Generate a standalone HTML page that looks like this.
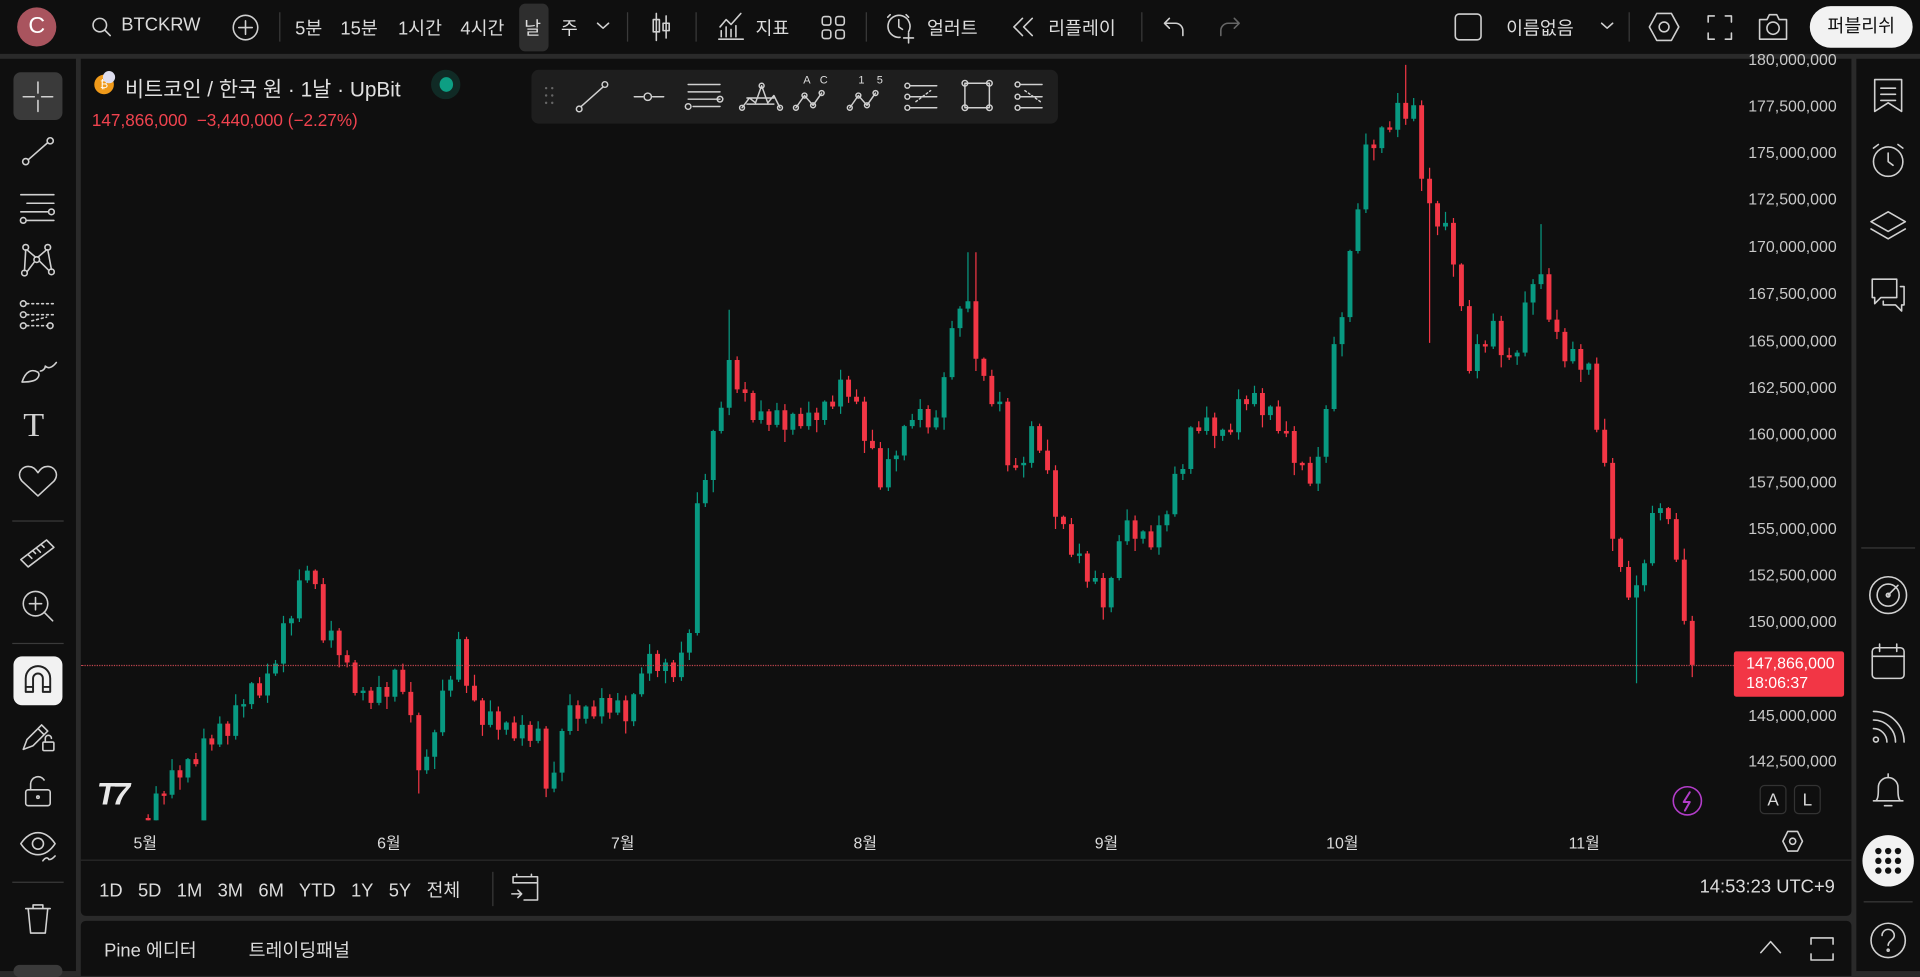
<!DOCTYPE html>
<html><head><meta charset="utf-8">
<style>
*{margin:0;padding:0;box-sizing:border-box}
html,body{width:1920px;height:971px;overflow:hidden;background:#2a2a2a}
#w{position:absolute;left:0;top:0;width:1568px;height:793px;transform:scale(1.22449);transform-origin:0 0;font-family:"Liberation Sans","Noto Sans CJK KR",sans-serif;color:#d8d8d8;background:#2a2a2a}
.p{position:absolute;background:#0f0f0f}
.t{position:absolute;white-space:nowrap;font-size:15px;color:#dcdcdc}
.sep{position:absolute;width:1px;background:#3a3a3a}
svg.i{position:absolute;fill:none;stroke:#d0d0d0;stroke-width:1.3;stroke-linecap:round;stroke-linejoin:round}
.ax{position:absolute;right:68px;font-size:13px;color:#c8c8c8;text-align:right}
</style></head><body><div id="w">
<!-- top bar -->
<div class="p" style="left:0;top:0;width:1568px;height:44px"></div>
<div style="position:absolute;left:14px;top:6px;width:32px;height:32px;border-radius:50%;background:#a9545e;color:#fff;font-size:19px;text-align:center;line-height:32px">C</div>
<svg class="i" style="left:74px;top:13px" width="18" height="18"><circle cx="7.5" cy="7.5" r="5.5"/><path d="M11.5 11.5l4.5 4.5"/></svg>
<div class="t" style="left:99px;top:12px">BTCKRW</div>
<svg class="i" style="left:189px;top:11px" width="23" height="23"><circle cx="11.5" cy="11.5" r="10"/><path d="M11.5 6v11M6 11.5h11"/></svg>
<div class="sep" style="left:228px;top:10px;height:24px"></div>
<div class="t" style="left:241px;top:12px">5분</div>
<div class="t" style="left:278px;top:12px">15분</div>
<div class="t" style="left:325px;top:12px">1시간</div>
<div class="t" style="left:376px;top:12px">4시간</div>
<div style="position:absolute;left:424px;top:3px;width:24px;height:39px;background:#2e2e2e;border-radius:5px"></div>
<div class="t" style="left:428px;top:12px">날</div>
<div class="t" style="left:458px;top:12px">주</div>
<svg class="i" style="left:487px;top:17px" width="11" height="8"><path d="M1 2l4.5 4 4.5-4"/></svg>
<div class="sep" style="left:512px;top:10px;height:24px"></div>
<svg class="i" style="left:530px;top:10px" width="20" height="24"><path d="M6 1v22M14 3v18"/><rect x="3.5" y="6" width="5" height="10"/><rect x="11.5" y="9" width="5" height="6"/></svg>
<div class="sep" style="left:568px;top:10px;height:24px"></div>
<svg class="i" style="left:585px;top:10px" width="24" height="24"><path d="M2 22h20M4 20v-5M8 20v-8M12 20v-6M16 20v-9M3 12l5-6 4 4 8-9"/></svg>
<div class="t" style="left:617px;top:12px">지표</div>
<svg class="i" style="left:670px;top:12px" width="21" height="21"><rect x="1.5" y="1.5" width="7" height="7" rx="2"/><rect x="12.5" y="1.5" width="7" height="7" rx="2"/><rect x="1.5" y="12.5" width="7" height="7" rx="2"/><rect x="12.5" y="12.5" width="7" height="7" rx="2"/></svg>
<div class="sep" style="left:707px;top:10px;height:24px"></div>
<svg class="i" style="left:723px;top:9px" width="26" height="27"><path d="M19 17a9 9 0 1 0-7 4.5"/><path d="M11 7v6l3 2M19 18v8M15 22h8M4 3l-2 2M17 3l2 2"/></svg>
<div class="t" style="left:757px;top:12px">얼러트</div>
<svg class="i" style="left:826px;top:14px" width="20" height="16"><path d="M9 1L2 8l7 7M17 1l-7 7 7 7"/></svg>
<div class="t" style="left:856px;top:12px">리플레이</div>
<div class="sep" style="left:932px;top:10px;height:24px"></div>
<svg class="i" style="left:949px;top:13px" width="20" height="18"><path d="M6 2L2 6l4 4M2 6h9a6 6 0 0 1 6 6v4"/></svg>
<svg class="i" style="left:994px;top:13px;stroke:#666" width="20" height="18"><path d="M14 2l4 4-4 4M18 6H9a6 6 0 0 0-6 6v4"/></svg>
<svg class="i" style="left:1187px;top:10px" width="24" height="24"><rect x="1.5" y="1.5" width="21" height="21" rx="3"/></svg>
<div class="t" style="left:1230px;top:12px">이름없음</div>
<svg class="i" style="left:1307px;top:17px" width="11" height="8"><path d="M1 2l4.5 4 4.5-4"/></svg>
<div class="sep" style="left:1330px;top:10px;height:24px"></div>
<svg class="i" style="left:1346px;top:9px" width="26" height="26"><path d="M7 2h12l6 11-6 11H7L1 13z"/><circle cx="13" cy="13" r="4"/></svg>
<svg class="i" style="left:1394px;top:12px" width="21" height="21"><path d="M1 6V1h5M15 1h5v5M20 15v5h-5M6 20H1v-5"/></svg>
<svg class="i" style="left:1435px;top:10px" width="26" height="24"><path d="M2 6h6l2-4h6l2 4h6v16H2z"/><circle cx="13" cy="13" r="5"/></svg>
<div style="position:absolute;left:1478px;top:5px;width:84px;height:34px;border-radius:17px;background:#f2f2f2;color:#111;font-size:15px;text-align:center;line-height:34px">퍼블리쉬</div>

<!-- left toolbar -->
<div class="p" style="left:0;top:48px;width:62px;height:745px"></div>
<div style="position:absolute;left:11px;top:59px;width:40px;height:39px;background:#3a3a3a;border-radius:6px"></div>
<svg class="i" style="left:16px;top:64px" width="30" height="30"><path d="M15 3v9M15 18v9M3 15h9M18 15h9"/></svg>
<svg class="i" style="left:16px;top:110px" width="30" height="28"><circle cx="5" cy="22" r="2.5"/><circle cx="25" cy="5" r="2.5"/><path d="M7 20.5l16-14"/></svg>
<svg class="i" style="left:14px;top:155px" width="32" height="28"><path d="M3 4h27M8 11h22M3 18h22M8 25h22"/><circle cx="28" cy="18" r="2.3"/><circle cx="5" cy="25" r="2.3"/></svg>
<svg class="i" style="left:16px;top:198px" width="30" height="30"><circle cx="5" cy="4" r="2.3"/><circle cx="23" cy="4" r="2.3"/><circle cx="4" cy="25" r="2.3"/><circle cx="26" cy="24" r="2.3"/><circle cx="14" cy="14" r="2.3"/><path d="M5 6l-1 17M6 6l7 6M22 6l-7 6M23 6l3 16M6 24l6-8M24 23l-8-8"/></svg>
<svg class="i" style="left:14px;top:244px" width="32" height="28"><circle cx="5" cy="4" r="2.3"/><circle cx="5" cy="13" r="2.3"/><circle cx="5" cy="22" r="2.3"/><circle cx="27" cy="22" r="2.3"/><path d="M8 4h22M8 13h22M8 22h17M12 18l12-3" stroke-dasharray="1.5 2.5"/></svg>
<svg class="i" style="left:16px;top:288px" width="32" height="28"><path d="M2 24c3-9 8-11 13-8 2 2 0 6-4 7-3 1-6 1-9 1zM17 15c2 0 4-2 4-4M21 11c2 2 5 2 9-3"/></svg>
<div style="position:absolute;left:19px;top:332px;font-family:'Liberation Serif',serif;font-size:28px;color:#d0d0d0">T</div>
<svg class="i" style="left:14px;top:378px" width="34" height="30"><path d="M17 27L4 15C-1 9 4 2 10 3c3 0 5 2 7 5 2-3 4-5 7-5 6-1 11 6 6 12z"/></svg>
<div style="position:absolute;left:10px;top:425px;width:42px;height:1px;background:#3a3a3a"></div>
<svg class="i" style="left:15px;top:436px" width="32" height="30"><path d="M2 21L23 5l6 6L8 27z M8 17l3 3M12 14l2 2M15 12l3 3M19 9l2 2"/></svg>
<svg class="i" style="left:16px;top:480px" width="30" height="30"><circle cx="13" cy="13" r="10"/><path d="M20 20l7 7M13 8v10M8 13h10"/></svg>
<div style="position:absolute;left:10px;top:525px;width:42px;height:1px;background:#3a3a3a"></div>
<div style="position:absolute;left:11px;top:536px;width:40px;height:40px;background:#f2f2f2;border-radius:7px"></div>
<svg class="i" style="left:19px;top:543px;stroke:#222;stroke-width:1.6" width="24" height="26"><path d="M2 22V11a10 10 0 0 1 20 0v11h-6V11a4 4 0 0 0-8 0v11zM2 18h6M16 18h6"/></svg>
<svg class="i" style="left:16px;top:588px" width="30" height="28"><path d="M3 24l3-8L18 4l5 5-12 12zM15 7l5 5"/><rect x="19" y="18" width="9" height="7" rx="1"/><path d="M21 18v-3a2.5 2.5 0 0 1 5 0"/></svg>
<svg class="i" style="left:19px;top:632px" width="24" height="28"><rect x="2" y="13" width="20" height="13" rx="2"/><path d="M6 13V8a6 6 0 0 1 11-3"/><circle cx="12" cy="19" r="1"/></svg>
<svg class="i" style="left:15px;top:675px" width="32" height="32"><path d="M2 14c4-6 9-9 14-9s10 3 14 9c-4 6-9 9-14 9S6 20 2 14z"/><circle cx="16" cy="14" r="4.5"/><path d="M20 28c2-3 4-3 5-1M25 27c2 0 3-1 5-3"/></svg>
<div style="position:absolute;left:10px;top:720px;width:42px;height:1px;background:#3a3a3a"></div>
<svg class="i" style="left:19px;top:736px" width="24" height="28"><path d="M2 6h20M8 6V3h8v3M4 6l2 20h12l2-20"/></svg>
<div style="position:absolute;left:11px;top:788px;width:40px;height:10px;background:#3a3a3a;border-radius:6px"></div>

<!-- right toolbar -->
<div class="p" style="left:1516px;top:48px;width:52px;height:745px"></div>
<svg class="i" style="left:1528px;top:63px" width="28" height="30"><path d="M3 2h22v26l-11-7-11 7zM8 9h12M8 14h12M8 19h12"/></svg>
<svg class="i" style="left:1526px;top:115px" width="32" height="32"><circle cx="16" cy="17" r="12"/><path d="M16 10v7l4 3M4 6l4-3M28 6l-4-3"/></svg>
<svg class="i" style="left:1526px;top:171px" width="32" height="28"><path d="M16 2L2 10l14 8 14-8zM2 16l14 8 14-8"/></svg>
<svg class="i" style="left:1526px;top:225px" width="32" height="32"><path d="M3 3h20v15H10l-5 5v-5H3zM26 9h3v15h-2v5l-5-5H12v-3"/></svg>
<div style="position:absolute;left:1520px;top:447px;width:44px;height:1px;background:#3a3a3a"></div>
<svg class="i" style="left:1525px;top:469px" width="34" height="34"><circle cx="17" cy="17" r="15"/><circle cx="17" cy="17" r="9"/><path d="M17 17l8-8"/><circle cx="17" cy="17" r="1.5"/></svg>
<svg class="i" style="left:1527px;top:524px" width="30" height="32"><rect x="2" y="5" width="26" height="25" rx="3"/><path d="M2 12h26M8 2v6M22 2v6"/></svg>
<svg class="i" style="left:1528px;top:578px" width="30" height="32"><circle cx="4" cy="26" r="2"/><path d="M2 17a11 11 0 0 1 11 11M2 10a18 18 0 0 1 18 18M2 3a25 25 0 0 1 25 25"/></svg>
<svg class="i" style="left:1527px;top:629px" width="30" height="34"><path d="M3 25h24M5 25c2-2 2-6 2-11a8 8 0 0 1 16 0c0 5 0 9 2 11M12 29h6M15 3v3"/></svg>
<div style="position:absolute;left:1521px;top:682px;width:42px;height:42px;border-radius:50%;background:#f2f2f2"></div>
<svg style="position:absolute;left:1530px;top:691px" width="24" height="24"><g fill="#111"><circle cx="4" cy="4" r="2.6"/><circle cx="12" cy="4" r="2.6"/><circle cx="20" cy="4" r="2.6"/><circle cx="4" cy="12" r="2.6"/><circle cx="12" cy="12" r="2.6"/><circle cx="20" cy="12" r="2.6"/><circle cx="4" cy="20" r="2.6"/><circle cx="12" cy="20" r="2.6"/><circle cx="20" cy="20" r="2.6"/></g></svg>
<div style="position:absolute;left:1522px;top:736px;width:40px;height:1px;background:#3a3a3a"></div>
<svg class="i" style="left:1526px;top:752px" width="32" height="32"><circle cx="16" cy="16" r="14"/><path d="M11 12a5 5 0 0 1 10 0c0 4-5 4-5 8"/><circle cx="16" cy="24" r=".8"/></svg>

<!-- chart panel -->
<div class="p" style="left:66px;top:48px;width:1446px;height:700px;border-radius:0 0 4px 4px"></div>
<svg style="position:absolute;left:66px;top:48px" width="1346" height="622" fill="none">
<g stroke="#089981">
<path stroke-width="1" d="M61.5 594V624M74.5 572V604M87.5 571V591M100.5 547V630M113.5 537V562M126.5 519V556M133 523V538M139.5 509V531M152.5 494V526M159 491V504M165.5 455V501M172 455V471M178.5 417V460M185 414V428M204.5 459V481M230.5 513V524M243.5 504V528M256.5 498V525M282.5 564V584M289 548V580M295.5 507V553M302 504V521M308.5 468V509M334.5 524V546M347.5 541V552M360.5 536V561M373.5 541V559M386.5 574V599M393 547V590M399.5 519V552M412.5 528V543M425.5 514V543M438.5 518V536M451.5 518V545M458 497V521M464.5 478V508M477.5 490V510M490.5 476V508M497 466V491M503.5 354V471M510 339V366M516.5 303V354M523 280V306M529.5 205V291M555.5 279V298M568.5 281V301M581.5 289V307M594.5 280V303M607.5 279V299M620.5 254V290M659.5 318V353M666 320V337M672.5 299V328M679 290V302M685.5 278V301M698.5 287V303M705 256V303M711.5 214V262M718 202V227M724.5 158V207M750.5 272V288M770 325V342M776.5 296V334M815.5 396V412M828.5 418V429M841.5 423V452M848 389V426M854.5 368V397M867.5 385V396M880.5 373V405M887 369V386M893.5 333V374M900 331V344M906.5 300V339M919.5 284V307M932.5 302V312M945.5 270V311M958.5 267V284M971.5 283V295M1010.5 317V353M1017 283V330M1023.5 227V288M1030 207V243M1036.5 156V215M1043 118V159M1049.5 61V126M1062.5 55V77M1075.5 28V64M1088.5 32V51M1114.5 125V140M1140.5 225V261M1153.5 208V237M1173 238V250M1179.5 190V243M1186 180V209M1192.5 135V188M1218.5 231V249M1231.5 248V258M1270.5 422V510M1277 409V435M1283.5 365V414M1290 363V377"/>
<path stroke-width="4" d="M61.5 600V622M74.5 581V601M87.5 572V587M100.5 555V630M113.5 543V560M126.5 528V553M133 527V529M139.5 510V527M152.5 502V520M159 494V502M165.5 461V494M172 457V461M178.5 426V457M185 418V426M204.5 467V475M230.5 516V518M243.5 513V526M256.5 499V521M282.5 570V581M289 550V570M295.5 516V550M302 507V516M308.5 474V507M334.5 533V544M347.5 542V548M360.5 544V555M373.5 547V557M386.5 583V596M393 549V583M399.5 528V549M412.5 529V539M425.5 522V537M438.5 524V534M451.5 519V541M458 502V519M464.5 486V502M477.5 493V500M490.5 485V505M497 469V485M503.5 363V469M510 344V363M516.5 304V344M523 285V304M529.5 246V285M555.5 288V295M568.5 287V299M581.5 290V303M594.5 289V300M607.5 280V295M620.5 262V284M659.5 327V350M666 324V327M672.5 300V324M679 295V300M685.5 286V295M698.5 293V301M705 260V293M711.5 220V260M718 204V220M724.5 198V204M750.5 280V282M770 330V332M776.5 300V330M815.5 404V406M828.5 424V427M841.5 424V448M848 394V424M854.5 377V394M867.5 386V392M880.5 381V399M887 372V381M893.5 339V372M900 335V339M906.5 301V335M919.5 293V304M932.5 303V308M945.5 278V305M958.5 273V282M971.5 284V291M1010.5 325V347M1017 286V325M1023.5 233V286M1030 211V233M1036.5 157V211M1043 123V157M1049.5 70V123M1062.5 56V73M1075.5 36V58M1088.5 38V49M1114.5 134V137M1140.5 233V255M1153.5 214V235M1173 240V243M1179.5 199V240M1186 184V199M1192.5 176V184M1218.5 237V247M1231.5 249V254M1270.5 430V440M1277 412V430M1283.5 371V412M1290 367V371"/>
</g>
<g stroke="#f23645">
<path stroke-width="1" d="M55 617V627M68 598V609M81 577V597M94 567V578M107 552V565M120 541V560M146 505V522M191.5 417V433M198 424V477M211 465V497M217.5 483V497M224 491V520M237 513V531M250 509V531M263 494V519M269.5 509V542M276 534V600M315 472V518M321.5 503V525M328 522V553M341 529V556M354 537V557M367 541V562M380 545V603M406 524V549M419 524V539M432 519V539M445 520V551M471 483V505M484 491V509M536 243V273M542.5 264V280M549 271V297M562 286V304M575 282V313M588 285V302M601 285V305M614 275V286M627 259V281M633.5 270V282M640 276V322M646.5 303V319M653 313V352M692 283V306M731 158V255M737.5 244V263M744 254V284M757 277V337M763.5 326V336M783 298V322M789.5 311V339M796 332V384M802.5 373V384M809 375V407M822 402V432M835 420V458M861 373V402M874 381V401M913 296V306M926 289V318M939 298V307M952 275V287M965 269V301M978 279V306M984.5 296V309M991 300V340M997.5 329V336M1004 325V349M1056 66V83M1069 51V60M1082 5V54M1095 34V108M1101.5 89V232M1108 116V144M1121 130V178M1127.5 167V206M1134 197V257M1147 230V240M1160 210V252M1166.5 236V246M1199 171V215M1205.5 205V229M1212 220V252M1225 233V264M1238 244V305M1244.5 294V333M1251 326V402M1257.5 391V419M1264 410V442M1296.5 366V380M1303 371V411M1309.5 400V462M1316 455V505"/>
<path stroke-width="4" d="M55 620V622M68 600V602M81 581V587M94 572V576M107 555V560M120 543V553M146 510V520M191.5 418V429M198 429V475M211 467V487M217.5 487V493M224 493V518M237 516V526M250 513V521M263 499V517M269.5 517V536M276 536V581M315 474V512M321.5 512V524M328 524V544M341 533V548M354 542V555M367 544V557M380 547V596M406 528V539M419 529V537M432 522V534M445 524V541M471 486V500M484 493V505M536 246V270M542.5 270V273M549 273V295M562 288V299M575 287V303M588 290V300M601 289V295M614 280V284M627 262V276M633.5 276V280M640 280V312M646.5 312V318M653 318V350M692 286V301M731 198V245M737.5 245V259M744 259V282M757 280V332M763.5 332V334M783 300V320M789.5 320V336M796 336V374M802.5 374V380M809 380V405M822 404V427M835 424V448M861 377V392M874 386V399M913 301V304M926 293V308M939 303V305M952 278V282M965 273V291M978 284V304M984.5 304V306M991 304V330M997.5 330V332M1004 330V347M1056 70V73M1069 56V58M1082 36V49M1095 38V98M1101.5 98V118M1108 118V137M1121 134V168M1127.5 168V202M1134 202V255M1147 233V235M1160 214V242M1166.5 242V244M1199 176V213M1205.5 213V223M1212 223V247M1225 237V254M1238 249V303M1244.5 303V330M1251 330V392M1257.5 392V415M1264 415V440M1296.5 367V376M1303 376V409M1309.5 409V459M1316 459V495"/>
</g>
</svg>
<div style="position:absolute;left:66px;top:543px;width:1350px;height:0;border-top:1px dotted #c0464f"></div>
<div class="ax" style="top:41px">180,000,000</div>
<div class="ax" style="top:79px">177,500,000</div>
<div class="ax" style="top:117px">175,000,000</div>
<div class="ax" style="top:155px">172,500,000</div>
<div class="ax" style="top:194px">170,000,000</div>
<div class="ax" style="top:232px">167,500,000</div>
<div class="ax" style="top:271px">165,000,000</div>
<div class="ax" style="top:309px">162,500,000</div>
<div class="ax" style="top:347px">160,000,000</div>
<div class="ax" style="top:386px">157,500,000</div>
<div class="ax" style="top:424px">155,000,000</div>
<div class="ax" style="top:462px">152,500,000</div>
<div class="ax" style="top:500px">150,000,000</div>
<div class="ax" style="top:577px">145,000,000</div>
<div class="ax" style="top:614px">142,500,000</div>
<div style="position:absolute;left:1416px;top:532px;width:90px;height:37px;background:#f23645;border-radius:2px;color:#fff;font-size:13px;line-height:16px;padding:2px 0 0 10px">147,866,000<br>18:06:37</div>
<div style="position:absolute;left:1437px;top:641px;width:22px;height:24px;border:1px solid #333;border-radius:4px;font-size:14px;text-align:center;line-height:22px">A</div>
<div style="position:absolute;left:1465px;top:641px;width:22px;height:24px;border:1px solid #333;border-radius:4px;font-size:14px;text-align:center;line-height:22px">L</div>
<svg class="i" style="left:1365px;top:641px;stroke:#b23dc9" width="26" height="26"><circle cx="13" cy="13" r="11.5"/><path d="M15 6l-5 8h5l-4 7" stroke-width="1.6"/></svg>
<svg class="i" style="left:1454px;top:677px" width="20" height="20"><path d="M6 2h8l4 8-4 8H6l-4-8z"/><circle cx="10" cy="10" r="2.5"/></svg>
<div style="position:absolute;left:79px;top:633px;color:#e8e8e8;font-size:26px;font-weight:bold;letter-spacing:-3px;font-style:italic">T7</div>
<!-- legend -->
<div style="position:absolute;left:77px;top:61px;width:16px;height:16px;border-radius:50%;background:#f09a1a;color:#fff;font-size:9px;text-align:center;line-height:16px">₿</div>
<div style="position:absolute;left:84px;top:58px;width:10px;height:10px;border-radius:50%;background:#dde;"></div>
<div class="t" style="left:102px;top:59px;font-size:17px;color:#e0e0e0">비트코인 / 한국 원 · 1날 · UpBit</div>
<div style="position:absolute;left:352px;top:57px;width:24px;height:24px;border-radius:50%;background:#102a25"></div>
<div style="position:absolute;left:359px;top:63px;width:11px;height:12px;border-radius:50%;background:#0d9e83"></div>
<div class="t" style="left:75px;top:90px;font-size:14px;color:#f0434f">147,866,000&nbsp; −3,440,000 (−2.27%)</div>
<!-- floating toolbar -->
<div style="position:absolute;left:434px;top:57px;width:430px;height:44px;background:#1e1e1e;border-radius:6px"></div>
<svg class="i" style="left:440px;top:64px;stroke-width:1.2" width="420" height="30">
<path d="M6 8v0M6 14v0M6 20v0M11 8v0M11 14v0M11 20v0" stroke="#666" stroke-width="2"/>
<circle cx="33" cy="25" r="2.3"/><circle cx="54" cy="5" r="2.3"/><path d="M34.5 23l18-16"/>
<path d="M78 15h7M93 15h9"/><circle cx="89" cy="15" r="3"/>
<path d="M122 5h26M122 11h26M122 17h26M126 23h22"/><circle cx="122" cy="23" r="2.3"/><circle cx="148" cy="17" r="2.3"/>
<path d="M166 24l6-8 5 4 5-14 5 14 5-6 5 10M170 16h22M170 21h22"/><circle cx="166" cy="24" r="2"/><circle cx="182" cy="6" r="2"/><circle cx="197" cy="24" r="2"/>
<path d="M210 24l7-10 7 8 7-10"/><circle cx="210" cy="24" r="2"/><circle cx="217" cy="14" r="2"/><circle cx="224" cy="22" r="2"/><circle cx="231" cy="12" r="2"/>
<path d="M254 24l7-10 7 8 7-10"/><circle cx="254" cy="24" r="2"/><circle cx="261" cy="14" r="2"/><circle cx="268" cy="22" r="2"/><circle cx="275" cy="12" r="2"/>
<path d="M303 6h22M303 15h22M303 24h22"/><circle cx="301" cy="6" r="2"/><circle cx="301" cy="15" r="2"/><circle cx="301" cy="24" r="2"/><path d="M308 19l12-9" stroke-dasharray="1.5 2"/>
<rect x="348" y="4" width="20" height="20"/><circle cx="348" cy="4" r="2.3"/><circle cx="368" cy="4" r="2.3"/><circle cx="348" cy="24" r="2.3"/><circle cx="368" cy="24" r="2.3"/>
<path d="M393 5h18M393 15h18M393 24h18"/><circle cx="391" cy="5" r="2"/><circle cx="391" cy="15" r="2"/><circle cx="391" cy="24" r="2"/><path d="M397 10l14 10" stroke-dasharray="1.5 2"/>
</svg>
<div style="position:absolute;left:656px;top:60px;font-size:9px;color:#ddd">A&nbsp;&nbsp;&nbsp;C</div>
<div style="position:absolute;left:701px;top:60px;font-size:9px;color:#ddd">1&nbsp;&nbsp;&nbsp;&nbsp;5</div>
<!-- time axis -->
<div class="t" style="left:109px;top:678px;font-size:13px">5월</div>
<div class="t" style="left:308px;top:678px;font-size:13px">6월</div>
<div class="t" style="left:499px;top:678px;font-size:13px">7월</div>
<div class="t" style="left:697px;top:678px;font-size:13px">8월</div>
<div class="t" style="left:894px;top:678px;font-size:13px">9월</div>
<div class="t" style="left:1083px;top:678px;font-size:13px">10월</div>
<div class="t" style="left:1281px;top:678px;font-size:13px">11월</div>
<div style="position:absolute;left:66px;top:702px;width:1446px;height:1px;background:#2a2a2a"></div>
<div class="t" style="left:81px;top:716px">1D&nbsp;&nbsp; 5D&nbsp;&nbsp; 1M&nbsp;&nbsp; 3M&nbsp;&nbsp; 6M&nbsp;&nbsp; YTD&nbsp;&nbsp; 1Y&nbsp;&nbsp; 5Y&nbsp;&nbsp; 전체</div>
<div class="sep" style="left:402px;top:712px;height:28px"></div>
<svg class="i" style="left:416px;top:712px" width="26" height="26"><path d="M6 4v-2M18 4v-2M3 9V4h20v19H12M3 9h20M2 18h8M7 15l3 3-3 3"/></svg>
<div class="t" style="left:1388px;top:716px">14:53:23 UTC+9</div>
<!-- pine panel -->
<div class="p" style="left:66px;top:752px;width:1446px;height:45px;border-radius:4px 4px 0 0"></div>
<div class="t" style="left:85px;top:765px">Pine 에디터</div>
<div class="t" style="left:203px;top:765px">트레이딩패널</div>
<svg class="i" style="left:1436px;top:766px" width="20" height="14"><path d="M2 12l8-9 8 9"/></svg>
<svg class="i" style="left:1477px;top:764px" width="22" height="22"><path d="M2 7V2h18v5M2 15v5h18v-5"/></svg>
</div>
</body></html>
